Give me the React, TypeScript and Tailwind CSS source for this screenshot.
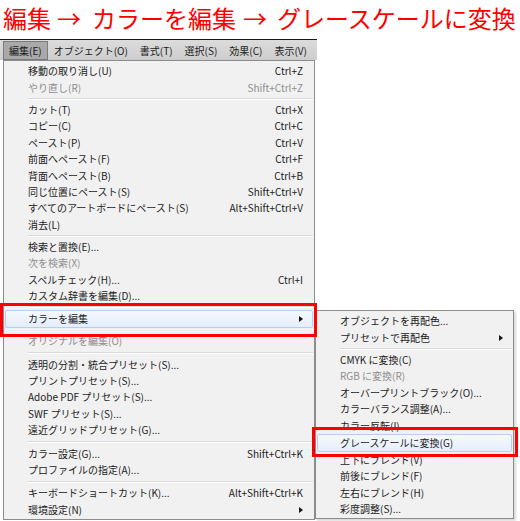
import React from "react";

type Item =
  | { type: "sep"; h?: number }
  | { type: "item"; label: string; shortcut?: string; disabled?: boolean; arrow?: boolean; hl?: boolean; h?: number };

const F = { fontFamily: '"Noto Sans CJK JP", "Noto Sans", sans-serif' };

const mainItems: Item[] = [
  { type: "item", label: "移動の取り消し(U)", shortcut: "Ctrl+Z" },
  { type: "item", label: "やり直し(R)", shortcut: "Shift+Ctrl+Z", disabled: true },
  { type: "sep", h: 6 },
  { type: "item", label: "カット(T)", shortcut: "Ctrl+X" },
  { type: "item", label: "コピー(C)", shortcut: "Ctrl+C" },
  { type: "item", label: "ペースト(P)", shortcut: "Ctrl+V" },
  { type: "item", label: "前面へペースト(F)", shortcut: "Ctrl+F" },
  { type: "item", label: "背面へペースト(B)", shortcut: "Ctrl+B" },
  { type: "item", label: "同じ位置にペースト(S)", shortcut: "Shift+Ctrl+V" },
  { type: "item", label: "すべてのアートボードにペースト(S)", shortcut: "Alt+Shift+Ctrl+V" },
  { type: "item", label: "消去(L)" },
  { type: "sep", h: 6 },
  { type: "item", label: "検索と置換(E)..." },
  { type: "item", label: "次を検索(X)", disabled: true },
  { type: "item", label: "スペルチェック(H)...", shortcut: "Ctrl+I" },
  { type: "item", label: "カスタム辞書を編集(D)..." },
  { type: "sep", h: 6 },
  { type: "item", label: "カラーを編集", arrow: true, hl: true, h: 18 },
  { type: "sep", h: 4.5 },
  { type: "item", label: "オリジナルを編集(O)", disabled: true },
  { type: "sep", h: 7 },
  { type: "item", label: "透明の分割・統合プリセット(S)..." },
  { type: "item", label: "プリントプリセット(S)..." },
  { type: "item", label: "Adobe PDF プリセット(S)..." },
  { type: "item", label: "SWF プリセット(S)..." },
  { type: "item", label: "遠近グリッドプリセット(G)..." },
  { type: "sep", h: 7 },
  { type: "item", label: "カラー設定(G)...", shortcut: "Shift+Ctrl+K" },
  { type: "item", label: "プロファイルの指定(A)..." },
  { type: "sep", h: 7 },
  { type: "item", label: "キーボードショートカット(K)...", shortcut: "Alt+Shift+Ctrl+K" },
  { type: "item", label: "環境設定(N)", arrow: true },
];

const subItems: Item[] = [
  { type: "item", label: "オブジェクトを再配色..." },
  { type: "item", label: "プリセットで再配色", arrow: true },
  { type: "sep", h: 6 },
  { type: "item", label: "CMYK に変換(C)" },
  { type: "item", label: "RGB に変換(R)", disabled: true },
  { type: "item", label: "オーバープリントブラック(O)..." },
  { type: "item", label: "カラーバランス調整(A)..." },
  { type: "item", label: "カラー反転(I)" },
  { type: "item", label: "グレースケールに変換(G)", hl: true, h: 18 },
  { type: "item", label: "上下にブレンド(V)" },
  { type: "item", label: "前後にブレンド(F)" },
  { type: "item", label: "左右にブレンド(H)" },
  { type: "item", label: "彩度調整(S)..." },
];

function Arrow() {
  return <span className="inline-block w-0 h-0 border-y-[3.5px] border-y-transparent border-l-[4px] border-l-[#111]" />;
}

function Rows({ items, pl, pr }: { items: Item[]; pl: string; pr: string }) {
  return (
    <>
      {items.map((it, i) => {
        if (it.type === "sep") {
          const h = it.h ?? 6;
          if (h < 5) return <div key={i} style={{ height: h }} />;
          return (
            <div key={i} className="flex flex-col justify-center pl-[24px] pr-[1px]" style={{ height: h }}>
              <div className="h-px bg-[#d9d9d9]" />
              <div className="h-px bg-white" />
            </div>
          );
        }
        const h = it.h ?? 16.4;
        return (
          <div key={i} className="relative flex items-center" style={{ height: h }}>
            {it.hl && (
              <div className="absolute inset-x-[1px] inset-y-0 rounded-[2px] border border-[#b3cff2] bg-gradient-to-b from-[#f6f9fe] to-[#e4eefb]" />
            )}
            <div className={`relative flex w-full items-center justify-between ${pl} ${pr}`}>
              <span className={it.disabled ? "text-[#8e8e8e]" : "text-[#1c1c1c]"}>{it.label}</span>
              {it.shortcut && (
                <span className={it.disabled ? "text-[#8e8e8e]" : "text-[#1c1c1c]"}>{it.shortcut}</span>
              )}
              {it.arrow && <Arrow />}
            </div>
          </div>
        );
      })}
    </>
  );
}

export default function App() {
  const bar = ["編集(E)", "オブジェクト(O)", "書式(T)", "選択(S)", "効果(C)", "表示(V)"];
  return (
    <div className="relative w-[520px] h-[521px] overflow-hidden bg-white" style={F}>
      <div className="flex h-[39px] items-center pl-[3px] pb-[4px] text-[24px] leading-[32px] text-[#ff0000]">
        <span>編集</span>
        <span className="ml-[6px]">→</span>
        <span className="ml-[11px]">カラーを編集</span>
        <span className="ml-[7px]">→</span>
        <span className="ml-[10px]">グレースケールに変換</span>
      </div>
      <div className="flex h-[21px] w-[317px] items-stretch border-t border-[#1a1a1a] bg-gradient-to-b from-[#dcdcdc] to-[#cdcdcd] pl-[3px] pt-[1px] text-[10px] text-[#1a1a1a]">
        {bar.map((b, i) => (
          <div
            key={i}
            className={
              i === 0
                ? "flex items-center border border-[#7b7b7b] bg-[#a9a9a9] px-[5px]"
                : "flex items-center px-[6px]"
            }
          >
            {b}
          </div>
        ))}
      </div>
      <div className="ml-[3px] w-[312px] border border-[#8c8c8c] bg-[#f1f1f1] pt-[2px] pb-[1px] text-[10px] leading-none">
        <Rows items={mainItems} pl="pl-[24px]" pr="pr-[11px]" />
      </div>

      <div className="absolute left-[315px] top-[310px] w-[199px] border border-[#8c8c8c] bg-[#f1f1f1] pt-[2px] pb-[1px] text-[10px] leading-none shadow-[2px_2px_2px_rgba(0,0,0,0.15)]">
        <Rows items={subItems} pl="pl-[24px]" pr="pr-[10px]" />
      </div>

      <div className="absolute left-0 top-[303px] h-[34px] w-[317px] border-[3px] border-[#ff0000]" />
      <div className="absolute left-[312px] top-[427px] h-[30px] w-[206px] border-[3px] border-[#ff0000]" />
    </div>
  );
}
